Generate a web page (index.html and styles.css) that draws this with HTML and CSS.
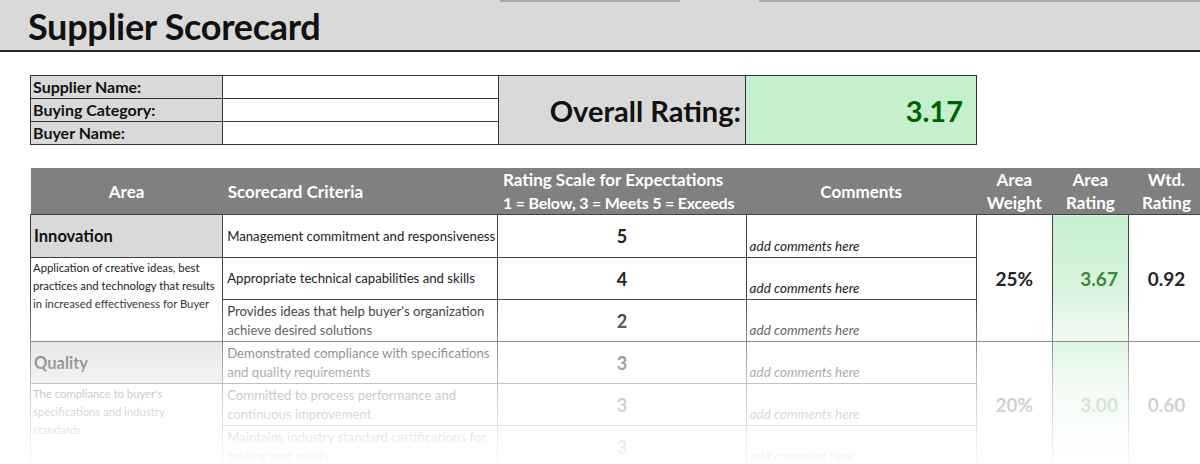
FILE: index.html
```html
<!DOCTYPE html>
<html lang="en">
<head>
<meta charset="utf-8">
<title>Supplier Scorecard</title>
<link rel="stylesheet" href="styles.css">
</head>
<body>
<div class="page">
  <header class="banner">
    <div class="strip"><span class="tab tab-a"></span><span class="tab tab-b"></span></div>
    <h1 class="title">Supplier Scorecard</h1>
  </header>

  <table class="info">
    <colgroup><col class="c-lbl"><col class="c-val"><col class="c-orl"><col class="c-orv"></colgroup>
    <tr>
      <th class="lbl">Supplier Name:</th><td class="val"></td>
      <th class="or-lbl" rowspan="3">Overall Rating:</th>
      <td class="or-val" rowspan="3">3.17</td>
    </tr>
    <tr><th class="lbl">Buying Category:</th><td class="val"></td></tr>
    <tr><th class="lbl">Buyer Name:</th><td class="val"></td></tr>
  </table>

  <table class="score">
    <colgroup>
      <col class="w-area"><col class="w-crit"><col class="w-scale"><col class="w-com">
      <col class="w-num"><col class="w-num"><col class="w-num">
    </colgroup>
    <thead>
      <tr>
        <th class="h-center">Area</th>
        <th class="h-left">Scorecard Criteria</th>
        <th class="h-left">Rating Scale for Expectations<br><span class="scale-2">1 = Below, 3 = Meets 5 = Exceeds</span></th>
        <th class="h-center">Comments</th>
        <th class="h-center">Area<br>Weight</th>
        <th class="h-center">Area<br>Rating</th>
        <th class="h-center">Wtd.<br>Rating</th>
      </tr>
    </thead>
    <tbody>
      <tr class="r-first">
        <td class="area-name">Innovation</td>
        <td class="crit">Management commitment and responsiveness</td>
        <td class="rate">5</td>
        <td class="com">add comments here</td>
        <td class="num" rowspan="3">25%</td>
        <td class="num green" rowspan="3">3.67</td>
        <td class="num" rowspan="3">0.92</td>
      </tr>
      <tr>
        <td class="desc" rowspan="2">Application of creative ideas, best practices and technology that results in increased effectiveness for Buyer</td>
        <td class="crit">Appropriate technical capabilities and skills</td>
        <td class="rate">4</td>
        <td class="com">add comments here</td>
      </tr>
      <tr>
        <td class="crit">Provides ideas that help buyer's organization achieve desired solutions</td>
        <td class="rate">2</td>
        <td class="com">add comments here</td>
      </tr>
      <tr>
        <td class="area-name">Quality</td>
        <td class="crit">Demonstrated compliance with specifications and quality requirements</td>
        <td class="rate">3</td>
        <td class="com">add comments here</td>
        <td class="num" rowspan="3">20%</td>
        <td class="num green" rowspan="3">3.00</td>
        <td class="num" rowspan="3">0.60</td>
      </tr>
      <tr>
        <td class="desc narrow" rowspan="2">The compliance to buyer's specifications and industry standards</td>
        <td class="crit">Committed to process performance and continuous improvement</td>
        <td class="rate">3</td>
        <td class="com">add comments here</td>
      </tr>
      <tr>
        <td class="crit">Maintains industry standard certifications for testing and audits</td>
        <td class="rate">3</td>
        <td class="com">add comment here</td>
      </tr>
    </tbody>
  </table>

  <div class="fade"></div>
</div>
</body>
</html>
```

FILE: styles.css
```css
* { box-sizing: border-box; }
html, body { margin: 0; padding: 0; background: #fff; }
body {
  font-family: Lato, "Open Sans", "Liberation Sans", sans-serif;
  color: #1a1a1a;
  width: 1200px;
  height: 464px;
  overflow: hidden;
}
.page { position: relative; width: 1200px; height: 464px; overflow: hidden; }

.banner {
  background: #d9d9d9;
  height: 52px;
  border-bottom: 2px solid #2b2b2b;
}
.strip { display: flex; height: 2px; }
.tab { display: block; height: 2px; background: #a5a8ad; }
.tab-a { margin-left: 500px; width: 180px; }
.tab-b { margin-left: 79px; flex: 1; }
.title {
  margin: 0;
  padding: 4px 0 0 28px;
  font-size: 36px;
  font-weight: 700;
  line-height: 40px;
  color: #111;
  letter-spacing: -0.3px;
}

/* info table */
.info {
  margin: 23px 0 0 30px;
  border-collapse: collapse;
  table-layout: fixed;
  width: 946px;
}
.c-lbl { width: 192px; }
.c-val { width: 276px; }
.c-orl { width: 247px; }
.c-orv { width: 231px; }
.info th, .info td { border: 1px solid #333; padding: 0; }
.info .lbl {
  background: #d9d9d9;
  height: 23px;
  line-height: 20px;
  text-align: left;
  font-size: 16px;
  font-weight: 700;
  padding-left: 2px;
  color: #111;
}
.info .val { background: #fff; }
.info .or-lbl {
  background: #d9d9d9;
  text-align: right;
  font-size: 29px;
  font-weight: 700;
  padding-right: 4px;
  color: #111;
}
.info .or-val {
  background: #c6efce;
  text-align: right;
  font-size: 29px;
  font-weight: 700;
  color: #006100;
  padding-right: 13px;
}

/* score table */
.score {
  margin: 23px 0 0 30px;
  border-collapse: collapse;
  table-layout: fixed;
  width: 1175px;
}
.w-area { width: 192px; }
.w-crit { width: 275px; }
.w-scale { width: 248px; }
.w-com { width: 230px; }
.w-num { width: 76px; }

.score thead th {
  background: #808080;
  color: #fff;
  font-size: 17px;
  font-weight: 700;
  line-height: 23px;
  height: 46px;
  padding: 0;
  border: none;
  border-bottom: 1px solid #404040;
  white-space: nowrap;
}
.score .h-center { text-align: center; }
.score .h-left { text-align: left; padding-left: 5px; }
.scale-2 { font-size: 16px; letter-spacing: -0.2px; }

.score tbody td {
  border: 1px solid #404040;
  padding: 0;
  height: 42px;
  vertical-align: middle;
}
.score .r-first td { height: 43px; }

.area-name {
  background: #d9d9d9;
  font-size: 16.5px;
  font-weight: 700;
  padding-left: 3px !important;
  color: #111;
}
.desc {
  vertical-align: top !important;
  font-size: 11.3px;
  line-height: 18px;
  padding: 1px 2px 0 2px !important;
  color: #222;
}
.desc.narrow { padding-right: 16px !important; }
.crit {
  font-size: 13.2px;
  line-height: 19px;
  padding-left: 4px !important;
  color: #222;
}
.rate {
  text-align: center;
  font-size: 18px;
  font-weight: 700;
  color: #222;
}
.com {
  vertical-align: bottom !important;
  font-size: 13.5px;
  font-style: italic;
  padding: 0 0 3px 3px !important;
  color: #222;
}
.num {
  text-align: center;
  font-size: 19px;
  font-weight: 700;
  color: #262626;
}
.num.green {
  background: linear-gradient(to bottom, #c6efce 0%, #e6f7e9 100%);
  color: #3a8a3a;
  text-align: right;
  padding-right: 10px !important;
}

.fade {
  position: absolute;
  left: 0;
  right: 0;
  top: 290px;
  bottom: 0;
  pointer-events: none;
  background: linear-gradient(to bottom,
    rgba(255,255,255,0) 0%,
    rgba(255,255,255,0.2) 17%,
    rgba(255,255,255,0.5) 37%,
    rgba(255,255,255,0.75) 60%,
    rgba(255,255,255,0.9) 86%,
    rgba(255,255,255,0.97) 100%);
}
```
